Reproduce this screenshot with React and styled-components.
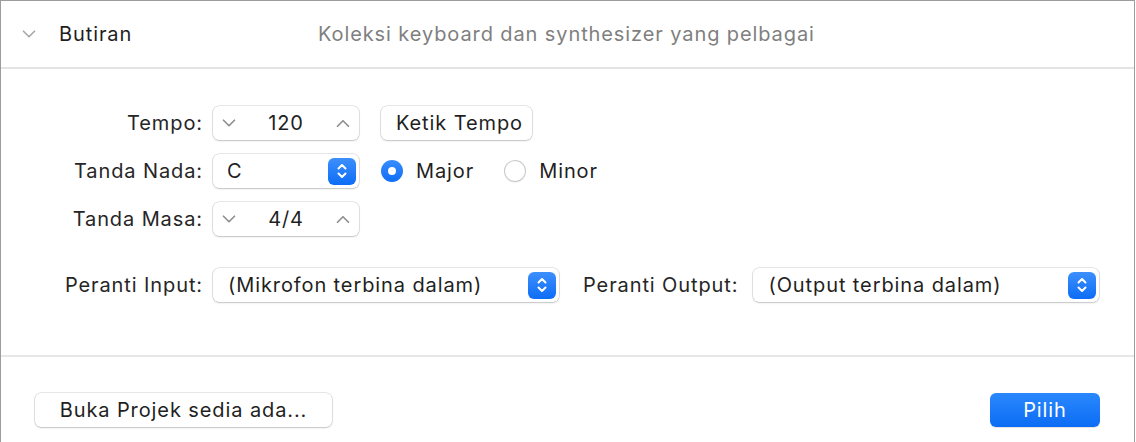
import React from "react";
import styled, { createGlobalStyle } from "styled-components";

const GlobalStyle = createGlobalStyle`
  html, body {
    margin: 0;
    padding: 0;
    background: #fff;
  }
  body {
    font-family: Inter, "Noto Sans", "Liberation Sans", sans-serif;
    color: #262626;
    letter-spacing: 0.9px;
  }
`;

const Window = styled.div`
  width: 1133px;
  height: 442px;
  border: 1px solid #9c9c9c;
  border-bottom: none;
  background: #fff;
  display: flex;
  flex-direction: column;
`;

const Header = styled.div`
  height: 66px;
  border-bottom: 2px solid #e3e3e3;
  display: flex;
  align-items: center;
  padding-left: 21px;
`;

const Disclosure = styled.span`
  width: 16px;
  display: flex;
  align-items: center;
  margin-right: 21px;
`;

const Title = styled.div`
  font-size: 20px;
  color: #1f1f1f;
  width: 259px;
`;

const Description = styled.div`
  font-size: 20px;
  color: #7f7f7f;
`;

const Body = styled.div`
  flex: 1;
  border-bottom: 2px solid #e6e6e6;
  padding: 37px 0 0 0;
`;

const Grid = styled.div`
  display: grid;
  grid-template-columns: 202px auto;
  column-gap: 10px;
  row-gap: 14px;
  align-items: center;
`;

const Label = styled.div`
  font-size: 20px;
  text-align: right;
  white-space: nowrap;
  margin-top: ${(p) => p.$top || 0}px;
  margin-left: ${(p) => p.$left || 0}px;
`;

const Line = styled.div`
  display: flex;
  align-items: center;
  gap: ${(p) => p.$gap || 22}px;
  margin-top: ${(p) => p.$top || 0}px;
`;

const Field = styled.div`
  width: ${(p) => p.$w}px;
  height: 34px;
  box-sizing: border-box;
  background: #fff;
  border-radius: 6px;
  box-shadow: 0 0 0 0.5px rgba(0, 0, 0, 0.18), 0 1px 2px rgba(0, 0, 0, 0.16);
  display: flex;
  align-items: center;
  font-size: 20px;
  color: #1f1f1f;
  padding: 0 3px 0 ${(p) => p.$pl || 10}px;
`;

const Value = styled.span`
  flex: 1;
  text-align: ${(p) => (p.$center ? "center" : "left")};
  white-space: nowrap;
`;

const ArrowBtn = styled.span`
  width: 26px;
  display: flex;
  justify-content: center;
  align-items: center;
`;

const PopupIcon = styled.span`
  width: 28px;
  height: 27px;
  border-radius: 6px;
  background: linear-gradient(#3d8ffc, #0d6df6);
  display: flex;
  align-items: center;
  justify-content: center;
`;

const PushButton = styled.button`
  height: 34px;
  width: ${(p) => p.$w}px;
  border: none;
  border-radius: 6px;
  font-family: inherit;
  letter-spacing: inherit;
  font-size: 20px;
  padding: 0 0 0 ${(p) => p.$pl || 0}px;
  cursor: default;
  color: ${(p) => (p.$primary ? "#fff" : "#1f1f1f")};
  background: ${(p) => (p.$primary ? "linear-gradient(#2a88fd, #0c6cf4)" : "#fff")};
  box-shadow: ${(p) =>
    p.$primary
      ? "0 1px 1px rgba(0,0,0,0.12)"
      : "0 0 0 0.5px rgba(0,0,0,0.18), 0 1px 2px rgba(0,0,0,0.16)"};
`;

const Radio = styled.label`
  display: flex;
  align-items: center;
  gap: 13px;
  font-size: 20px;
  color: #1f1f1f;
  margin-left: ${(p) => p.$left || 0}px;
`;

const RadioDot = styled.span`
  width: 22px;
  height: 22px;
  box-sizing: border-box;
  border-radius: 50%;
  display: flex;
  align-items: center;
  justify-content: center;
  background: ${(p) => (p.$on ? "linear-gradient(#3a8dfd, #0f6ef5)" : "#fff")};
  box-shadow: ${(p) =>
    p.$on ? "none" : "inset 0 0 0 1px #c9c9c9, 0 1px 1px rgba(0,0,0,0.06)"};
  &::after {
    content: "";
    display: ${(p) => (p.$on ? "block" : "none")};
    width: 8px;
    height: 8px;
    border-radius: 50%;
    background: #fff;
  }
`;

const IoLine = styled.div`
  display: flex;
  align-items: center;
  gap: 15px;
`;

const Footer = styled.div`
  height: 86px;
  display: flex;
  justify-content: space-between;
  align-items: flex-start;
  padding: 36px 34px 0 34px;
  box-sizing: border-box;
`;

const Chevron = ({ up, color = "#8c8c8c", size = 14 }) => (
  <svg width={size} height={size * 0.6} viewBox="0 0 14 8">
    <path
      d={up ? "M1.5 7 L7 1.5 L12.5 7" : "M1.5 1 L7 6.5 L12.5 1"}
      fill="none"
      stroke={color}
      strokeWidth="1.6"
      strokeLinecap="round"
      strokeLinejoin="round"
    />
  </svg>
);

const UpDown = () => (
  <svg width="12" height="18" viewBox="0 0 12 18">
    <path
      d="M2.5 6.5 L6 3 L9.5 6.5 M2.5 11.5 L6 15 L9.5 11.5"
      fill="none"
      stroke="#fff"
      strokeWidth="2"
      strokeLinecap="round"
      strokeLinejoin="round"
    />
  </svg>
);

const Stepper = ({ value }) => (
  <Field $w={146} $pl={3}>
    <ArrowBtn>
      <Chevron />
    </ArrowBtn>
    <Value $center>{value}</Value>
    <ArrowBtn>
      <Chevron up />
    </ArrowBtn>
  </Field>
);

const Popup = ({ value, w, pl }) => (
  <Field $w={w} $pl={pl}>
    <Value>{value}</Value>
    <PopupIcon>
      <UpDown />
    </PopupIcon>
  </Field>
);

export default function App() {
  return (
    <>
      <GlobalStyle />
      <Window>
        <Header>
          <Disclosure>
            <Chevron color="#a6a6a6" size={14} />
          </Disclosure>
          <Title>Butiran</Title>
          <Description>Koleksi keyboard dan synthesizer yang pelbagai</Description>
        </Header>
        <Body>
          <Grid>
            <Label>Tempo:</Label>
            <Line>
              <Stepper value="120" />
              <PushButton $w={151} $pl={6}>Ketik Tempo</PushButton>
            </Line>
            <Label>Tanda Nada:</Label>
            <Line $gap={22}>
              <Popup value="C" w={146} pl={14} />
              <Radio>
                <RadioDot $on />
                Major
              </Radio>
              <Radio $left={8}>
                <RadioDot />
                Minor
              </Radio>
            </Line>
            <Label>Tanda Masa:</Label>
            <Line>
              <Stepper value="4/4" />
            </Line>
            <Label $top={18}>Peranti Input:</Label>
            <Line $top={18}>
              <IoLine>
                <Popup value="(Mikrofon terbina dalam)" w={346} pl={15} />
                <Label $left={9}>Peranti Output:</Label>
                <Popup value="(Output terbina dalam)" w={346} pl={15} />
              </IoLine>
            </Line>
          </Grid>
        </Body>
        <Footer>
          <PushButton $w={297}>Buka Projek sedia ada...</PushButton>
          <PushButton $primary $w={110}>
            Pilih
          </PushButton>
        </Footer>
      </Window>
    </>
  );
}
